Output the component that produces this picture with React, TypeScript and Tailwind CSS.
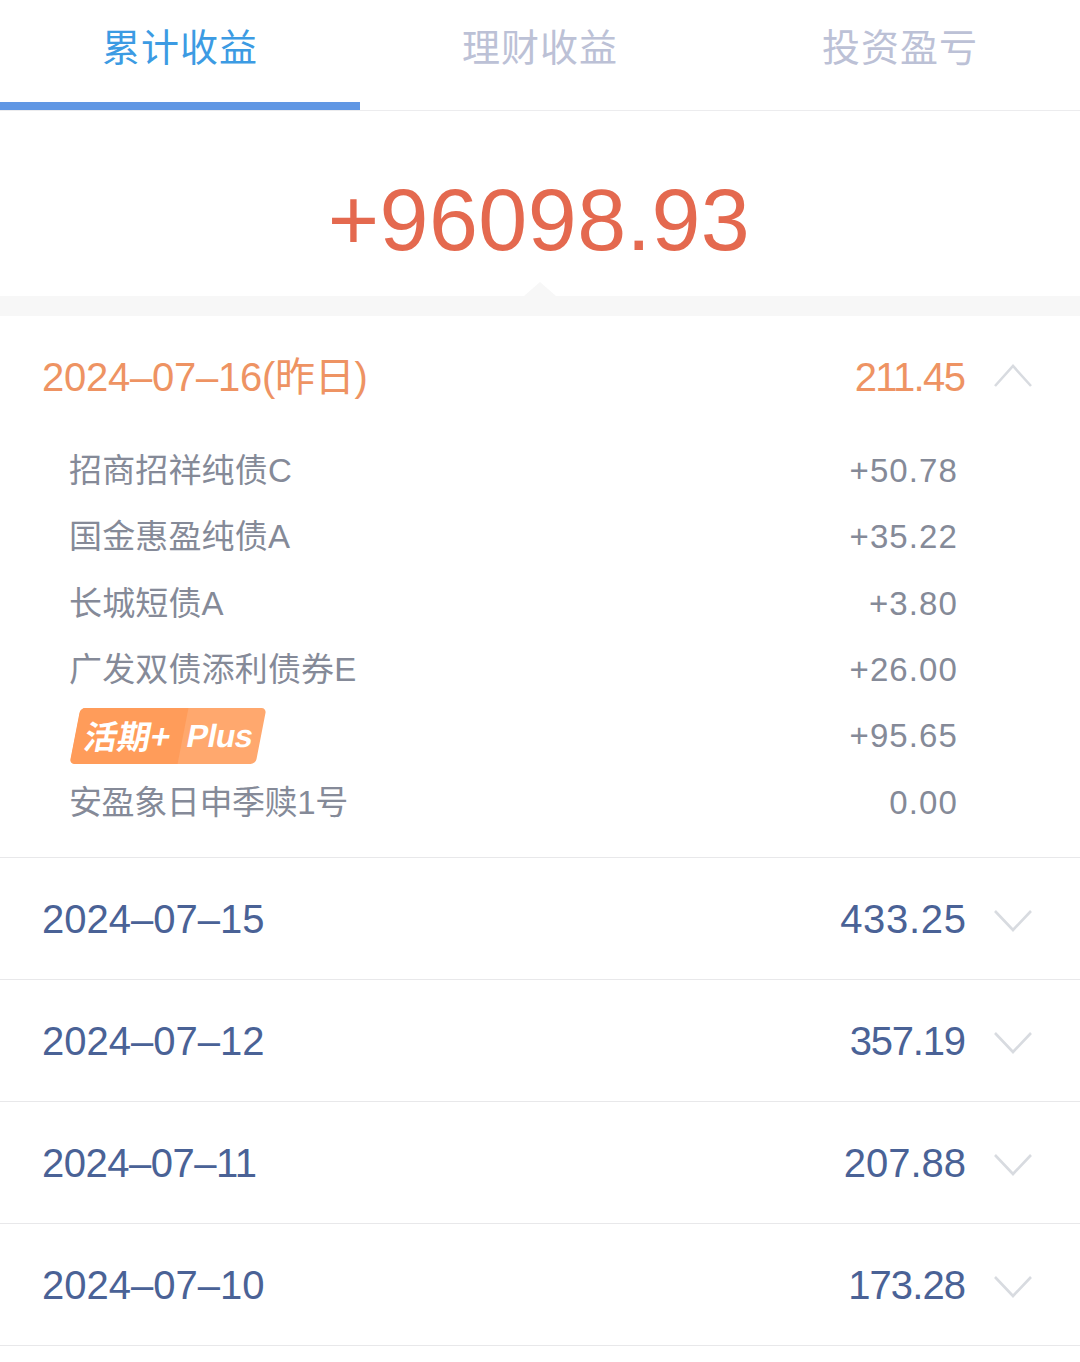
const sans = "font-['Liberation_Sans','Noto_Sans_CJK_SC',sans-serif]";

const tabs = ["累计收益", "理财收益", "投资盈亏"];

const funds: { name: string; value: string }[] = [
  { name: "招商招祥纯债C", value: "+50.78" },
  { name: "国金惠盈纯债A", value: "+35.22" },
  { name: "长城短债A", value: "+3.80" },
  { name: "广发双债添利债券E", value: "+26.00" },
  { name: "", value: "+95.65" },
  { name: "安盈象日申季赎1号", value: "0.00" },
];

const days = [
  { date: "2024–07–15", dateFit: "", amount: "433.25", amountFit: "tracking-[0.7px] mr-[-0.7px]" },
  { date: "2024–07–12", dateFit: "", amount: "357.19", amountFit: "tracking-[-1.2px] mr-[1.2px]" },
  { date: "2024–07–11", dateFit: "tracking-[-0.5px]", amount: "207.88", amountFit: "" },
  { date: "2024–07–10", dateFit: "", amount: "173.28", amountFit: "tracking-[-0.9px] mr-[0.9px]" },
];

const Chevron = ({ up }: { up?: boolean }) => (
  <svg width="40" height="28" viewBox="0 0 40 28" fill="none" className="ml-[27px] shrink-0">
    <path
      d={up ? "M2 23 L20 3 L38 23" : "M2 6 L20 25 L38 6"}
      stroke="#d8dbe0"
      strokeWidth="2.6"
    />
  </svg>
);

const PlusBadge = () => (
  <div className="flex h-[56px] w-[186px] ml-[6px] -skew-x-[11deg] overflow-hidden rounded-[5px] bg-[#ffa86e] text-white font-bold">
    <div className="flex w-[108px] items-center justify-center bg-[#ff9c5a] pr-[2px] text-[33px] font-['Noto_Sans_CJK_SC',sans-serif]">
      活期+
    </div>
    <div className="flex flex-1 items-center justify-center pr-[4px] text-[32px] tracking-[-0.5px] font-['Liberation_Sans',sans-serif]">
      Plus
    </div>
  </div>
);

const App = () => {
  return (
    <div className={`w-[1080px] h-[1362px] overflow-hidden bg-white ${sans}`}>
      {/* Tabs */}
      <div className="flex h-[111px] border-b border-[#ececee]">
        {tabs.map((tab, i) => (
          <div
            key={tab}
            className={`flex flex-1 items-start justify-center pt-[21px] text-[38px] leading-[54px] tracking-[1px] ${
              i === 0 ? "h-[110px] border-b-[8px] border-[#6097e4] text-[#3c9be3]" : "text-[#bcc1d6]"
            }`}
          >
            {tab}
          </div>
        ))}
      </div>

      {/* Total */}
      <div className="relative flex h-[185px] items-start justify-center pt-[54px] pr-[2px]">
        <span className="text-[88px] leading-[110px] tracking-[0.45px] text-[#e4694f]">+96098.93</span>
        <div className="absolute bottom-0 left-[524px] h-0 w-0 border-x-[16px] border-b-[14px] border-x-transparent border-b-[#f7f7f7]" />
      </div>
      <div className="h-[20px] bg-[#f7f7f7]" />

      {/* Expanded day */}
      <div className="border-b border-[#e8e8ea] pb-[21.6px]">
        <div className="flex h-[122px] items-center pl-[42px] pr-[47px] text-[40px] text-[#ee9363]">
          <span className="flex-1 tracking-[-0.25px]">2024–07–16(昨日)</span>
          <span className="tracking-[-1.6px] mr-[1.6px]">211.45</span>
          <Chevron up />
        </div>
        <div className="-mt-[0.6px]">
          {funds.map((fund) => (
            <div
              key={fund.value}
              className="flex h-[66.4px] items-center pl-[69px] pr-[122px] text-[33px] text-[#858a98]"
            >
              <div className={`flex-1 ${fund.name.includes("1") ? "tracking-[-0.4px]" : "tracking-[0.15px]"}`}>
                {fund.name ? fund.name : <PlusBadge />}
              </div>
              <span className="tracking-[1.1px]">{fund.value}</span>
            </div>
          ))}
        </div>
      </div>

      {/* Other days */}
      {days.map((day) => (
        <div
          key={day.date}
          className="flex h-[122px] items-center border-b border-[#e8e8ea] pl-[42px] pr-[47px] text-[40px] text-[#4a6296]"
        >
          <span className={`flex-1 ${day.dateFit}`}>{day.date}</span>
          <span className={day.amountFit}>{day.amount}</span>
          <Chevron />
        </div>
      ))}
    </div>
  );
};

export default App;
